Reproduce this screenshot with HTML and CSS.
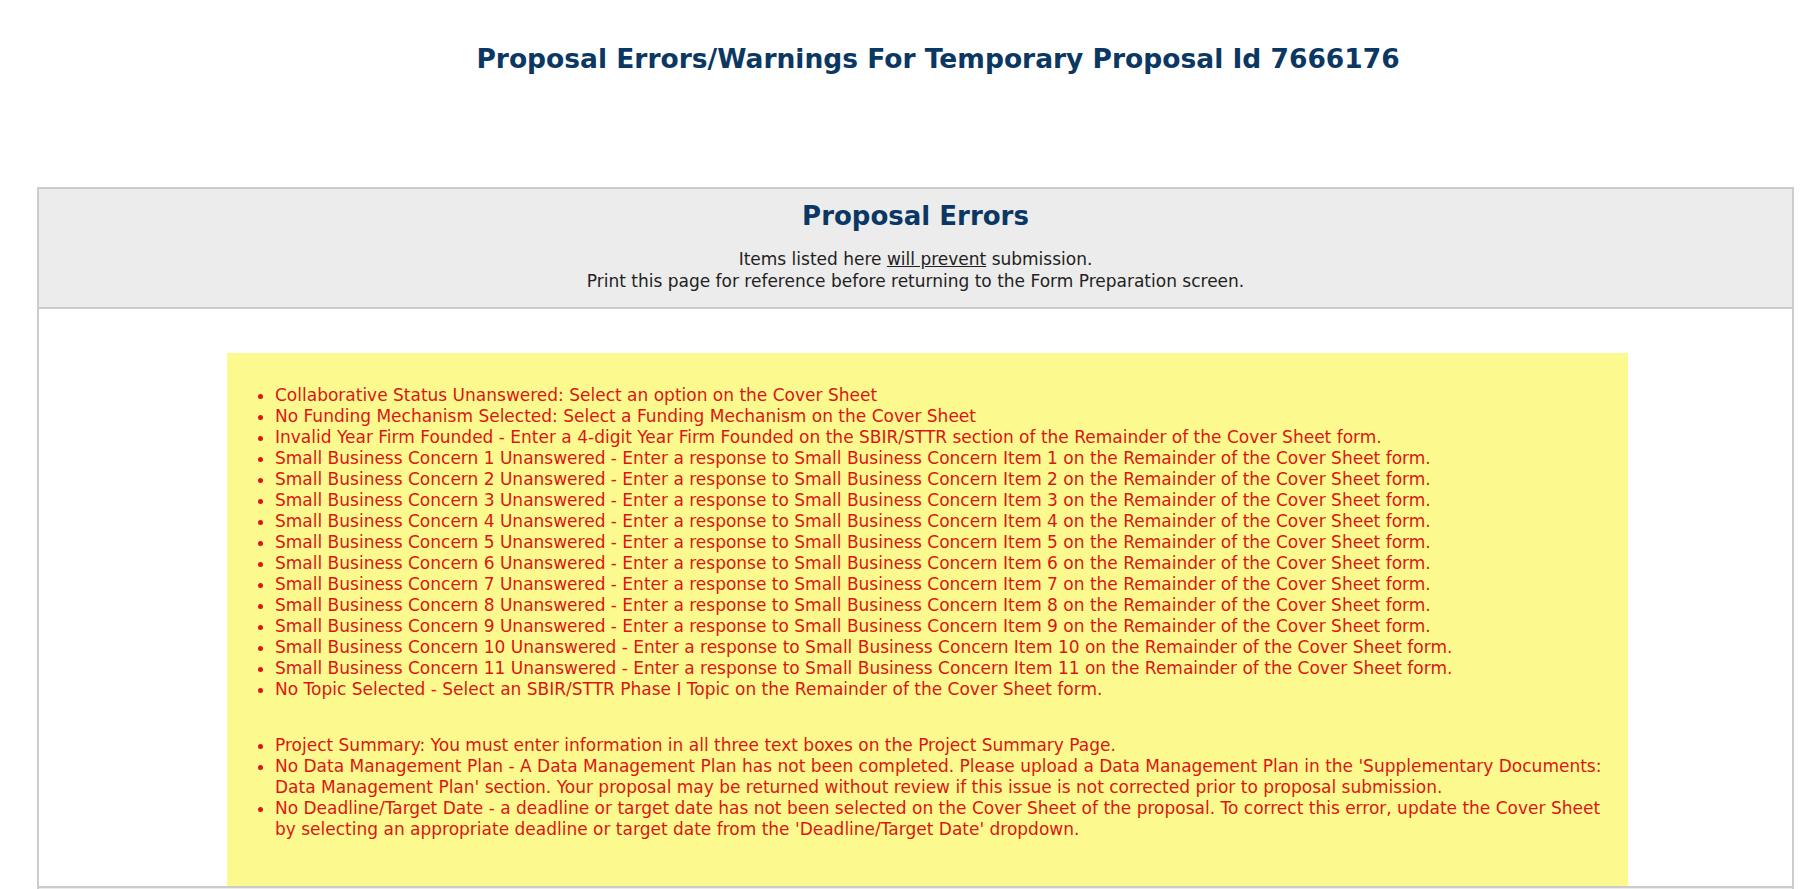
FILE: index.html
```html
<!DOCTYPE html>
<html lang="en">
<head>
<meta charset="utf-8">
<title>Proposal Errors/Warnings</title>
<link rel="stylesheet" href="styles.css">
</head>
<body>
<h1 class="page-title">Proposal Errors/Warnings For Temporary Proposal Id 7666176</h1>
<div class="panel">
  <div class="panel-head">
    <h2 class="panel-title">Proposal Errors</h2>
    <p class="panel-note">Items listed here <span class="under">will prevent</span> submission.<br>Print this page for reference before returning to the Form Preparation screen.</p>
  </div>
  <div class="panel-body">
    <div class="error-box">
      <ul class="error-list">
        <li>Collaborative Status Unanswered: Select an option on the Cover Sheet</li>
        <li>No Funding Mechanism Selected: Select a Funding Mechanism on the Cover Sheet</li>
        <li>Invalid Year Firm Founded - Enter a 4-digit Year Firm Founded on the SBIR/STTR section of the Remainder of the Cover Sheet form.</li>
        <li>Small Business Concern 1 Unanswered - Enter a response to Small Business Concern Item 1 on the Remainder of the Cover Sheet form.</li>
        <li>Small Business Concern 2 Unanswered - Enter a response to Small Business Concern Item 2 on the Remainder of the Cover Sheet form.</li>
        <li>Small Business Concern 3 Unanswered - Enter a response to Small Business Concern Item 3 on the Remainder of the Cover Sheet form.</li>
        <li>Small Business Concern 4 Unanswered - Enter a response to Small Business Concern Item 4 on the Remainder of the Cover Sheet form.</li>
        <li>Small Business Concern 5 Unanswered - Enter a response to Small Business Concern Item 5 on the Remainder of the Cover Sheet form.</li>
        <li>Small Business Concern 6 Unanswered - Enter a response to Small Business Concern Item 6 on the Remainder of the Cover Sheet form.</li>
        <li>Small Business Concern 7 Unanswered - Enter a response to Small Business Concern Item 7 on the Remainder of the Cover Sheet form.</li>
        <li>Small Business Concern 8 Unanswered - Enter a response to Small Business Concern Item 8 on the Remainder of the Cover Sheet form.</li>
        <li>Small Business Concern 9 Unanswered - Enter a response to Small Business Concern Item 9 on the Remainder of the Cover Sheet form.</li>
        <li>Small Business Concern 10 Unanswered - Enter a response to Small Business Concern Item 10 on the Remainder of the Cover Sheet form.</li>
        <li>Small Business Concern 11 Unanswered - Enter a response to Small Business Concern Item 11 on the Remainder of the Cover Sheet form.</li>
        <li>No Topic Selected - Select an SBIR/STTR Phase I Topic on the Remainder of the Cover Sheet form.</li>
      </ul>
      <ul class="error-list">
        <li>Project Summary: You must enter information in all three text boxes on the Project Summary Page.</li>
        <li>No Data Management Plan - A Data Management Plan has not been completed. Please upload a Data Management Plan in the 'Supplementary Documents: Data Management Plan' section. Your proposal may be returned without review if this issue is not corrected prior to proposal submission.</li>
        <li>No Deadline/Target Date - a deadline or target date has not been selected on the Cover Sheet of the proposal. To correct this error, update the Cover Sheet by selecting an appropriate deadline or target date from the 'Deadline/Target Date' dropdown.</li>
      </ul>
    </div>
  </div>
  <div class="panel-head panel-head-next">
    <h2 class="panel-title">Proposal Warnings</h2>
    <p class="panel-note">Items listed here will not prevent submission.</p>
  </div>
</div>
</body>
</html>
```

FILE: styles.css
```css
body {
  margin: 0;
  background: #ffffff;
  font-family: Verdana, "DejaVu Sans", sans-serif;
  color: #222222;
}

.page-title {
  margin: 43px 0 0;
  padding-left: 61px;
  text-align: center;
  font-size: 26.5px;
  line-height: 31px;
  font-weight: bold;
  color: #0b3763;
}

.panel {
  margin: 113px 21px 0 37px;
  border: 2px solid #cccccc;
}

.panel-head {
  background: #ececec;
  text-align: center;
  padding: 12px 0 15px;
  border-bottom: 2px solid #cccccc;
}

.panel-head-next {
  padding-top: 24px;
}

.panel-title {
  margin: 0;
  font-size: 26px;
  line-height: 30px;
  font-weight: bold;
  color: #0b3763;
}

.panel-note {
  margin: 17px 0 0;
  font-size: 17px;
  line-height: 22px;
  color: #222222;
}

.under {
  text-decoration: underline;
}

.panel-body {
  padding: 44px 164px 0 188px;
  border-bottom: 2px solid #cccccc;
}

.error-box {
  background: #fcf98f;
  padding: 32px 8px 46px;
}

.error-list {
  margin: 0;
  padding-left: 40px;
  font-size: 17px;
  line-height: 21px;
  color: #db1616;
}

.error-list + .error-list {
  margin-top: 35px;
}
```
